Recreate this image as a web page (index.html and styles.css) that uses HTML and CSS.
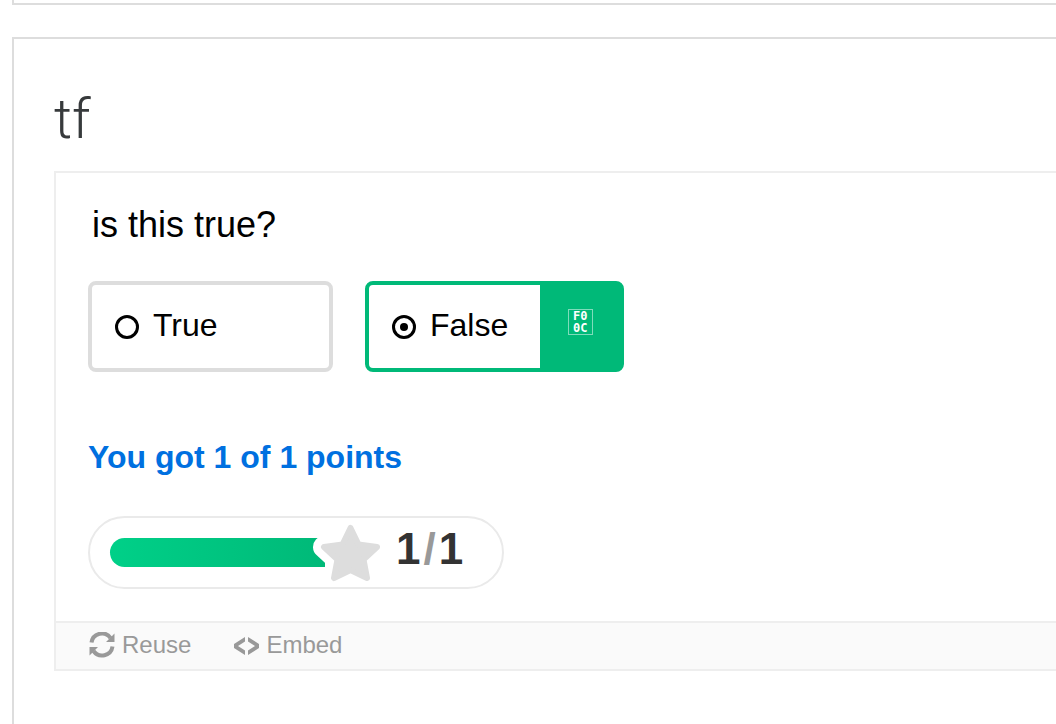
FILE: index.html
```html
<!DOCTYPE html>
<html lang="en">
<head>
    <meta charset="UTF-8">
    <meta name="viewport" content="width=device-width, initial-scale=1.0">
    <title>tf</title>
    <link rel="stylesheet" href="styles.css">
</head>
<body>
    <div class="card card-previous"></div>
    <main class="card card-current">
        <h1>tf</h1>
        <section class="panel">
            <form class="question">
                <p class="question-text" id="question">is this true?</p>
                <div class="answers" role="radiogroup" aria-labelledby="question">
                    <label class="answer">
                        <input type="radio" name="answer" value="true">
                        <span class="answer-text">True</span>
                    </label>
                    <label class="answer correct">
                        <input type="radio" name="answer" value="false" checked>
                        <span class="answer-text">False</span>
                        <span class="mark"><span class="mark-code"><span>F0</span><span>0C</span></span></span>
                    </label>
                </div>
                <p class="feedback">You got 1 of 1 points</p>
                <div class="score">
                    <div class="bar"></div>
                    <svg class="star" viewBox="-12 -6 71 69" aria-hidden="true">
                        <path class="star-gap" d="M29.500 4 L37.500 20.500 L56 23 L42.500 35.500 L46 54 L29.500 46 L13 54 L16.500 35.500 L3 23 L21.500 20.500 Z"/>
                        <path class="star-fill" d="M29.500 4 L37.500 20.500 L56 23 L42.500 35.500 L46 54 L29.500 46 L13 54 L16.500 35.500 L3 23 L21.500 20.500 Z"/>
                    </svg>
                    <div class="points">1<span class="slash">/</span>1</div>
                </div>
            </form>
            <footer class="actions">
                <button type="button">
                    <svg viewBox="0 0 26 26" aria-hidden="true">
                        <path class="arc" d="M2.500 10.500A10.500 10.500 0 0 1 21.500 6M23.500 14.500A10.500 10.500 0 0 1 4.500 19"/>
                        <path d="M25.500 1.500v8.500h-8.500zM.5 15h8.500L.5 23.500z"/>
                    </svg>
                    <span>Reuse</span>
                </button>
                <button type="button">
                    <svg viewBox="0 0 26 26" aria-hidden="true">
                        <path d="M12 5v4.500l-7 4.500 7 4.500v4.500L1 16v-4zM15 5v4.500l7 4.500-7 4.500v4.500l11-7v-4z"/>
                    </svg>
                    <span>Embed</span>
                </button>
            </footer>
        </section>
    </main>
</body>
</html>
```

FILE: styles.css
```css
* {
    box-sizing: border-box;
}
body {
    display: flex;
    flex-direction: column;
    min-height: 100vh;
    margin: 0;
    padding-left: 12px;
    background-color: #fff;
    color: #000;
    font-family: "Liberation Sans", Arial, sans-serif;
    font-size: 32px;
}
h1,
p {
    margin: 0;
}
.card {
    border-left: 2px solid #ddd;
}
.card-previous {
    height: 5px;
    border-bottom: 2px solid #ddd;
}
.card-current {
    flex: 1;
    margin-top: 32px;
    padding: 48px 0 0 40px;
    border-top: 2px solid #ddd;
}
h1 {
    margin-bottom: 20px;
    color: #373a3c;
    font-family: Roboto, sans-serif;
    font-size: 56px;
    font-weight: 300;
    line-height: 64px;
}
.panel {
    border: 2px solid #eee;
    border-right: none;
}
.question {
    padding: 32px;
}
.question-text {
    padding-left: 4px;
    font-size: 36px;
    line-height: 40px;
}
.answers {
    display: flex;
    gap: 32px;
    margin-top: 36px;
}
.answer {
    display: flex;
    align-items: center;
    gap: 14px;
    min-width: 245px;
    height: 91px;
    padding-left: 23px;
    border: 4px solid #ddd;
    border-radius: 8px;
    line-height: 36px;
    cursor: pointer;
}
.answer input {
    appearance: none;
    display: grid;
    place-items: center;
    width: 24px;
    height: 24px;
    margin: 0;
    border: 3px solid #000;
    border-radius: 50%;
}
.answer input:checked::before {
    content: "";
    width: 8px;
    height: 8px;
    border-radius: 50%;
    background-color: #000;
}
.answer-text {
    padding-bottom: 4px;
}
.correct {
    border-color: #00b978;
}
.mark {
    display: flex;
    align-items: center;
    align-self: stretch;
    justify-content: center;
    width: 80px;
    margin-left: 18px;
    padding-bottom: 10px;
    background-color: #00b978;
}
.mark-code {
    display: grid;
    width: 25px;
    height: 26px;
    border: 1px solid #7fdcbb;
    color: #fff;
    font-family: "DejaVu Sans Mono", monospace;
    font-size: 12px;
    font-weight: bold;
    line-height: 12px;
    text-align: center;
}
.feedback {
    margin-top: 67px;
    color: #0070e0;
    font-weight: bold;
    line-height: 36px;
}
.score {
    display: flex;
    align-items: center;
    width: 416px;
    max-width: 100%;
    height: 73px;
    margin-top: 41px;
    padding-left: 20px;
    border: 2px solid #eaeaea;
    border-radius: 37px;
}
.bar {
    width: 215px;
    height: 29px;
    border-radius: 15px 0 0 15px;
    background: linear-gradient(to right, #00d088, #00b978);
}
.star {
    width: 71px;
    height: 69px;
    margin-left: -16px;
}
.star path {
    stroke-linejoin: round;
}
.star-gap {
    fill: #fff;
    stroke: #fff;
    stroke-width: 22px;
}
.star-fill {
    fill: #ddd;
    stroke: #ddd;
    stroke-width: 6px;
}
.points {
    margin-left: 16px;
    padding-bottom: 8px;
    color: #333;
    font-size: 44px;
    font-weight: bold;
    line-height: 48px;
}
.slash {
    padding: 0 3px;
    color: #999;
}
.actions {
    display: flex;
    gap: 42px;
    height: 48px;
    padding: 0 33px 2px;
    border-top: 2px solid #eee;
    background-color: #fafafa;
}
.actions button {
    display: flex;
    align-items: center;
    gap: 7px;
    padding: 0;
    border: none;
    background: none;
    color: #999;
    font-family: inherit;
    font-size: 24px;
    line-height: 28px;
    cursor: pointer;
}
.actions svg {
    width: 26px;
    height: 26px;
    fill: currentColor;
}
.arc {
    fill: none;
    stroke: currentColor;
    stroke-width: 4px;
}
```
